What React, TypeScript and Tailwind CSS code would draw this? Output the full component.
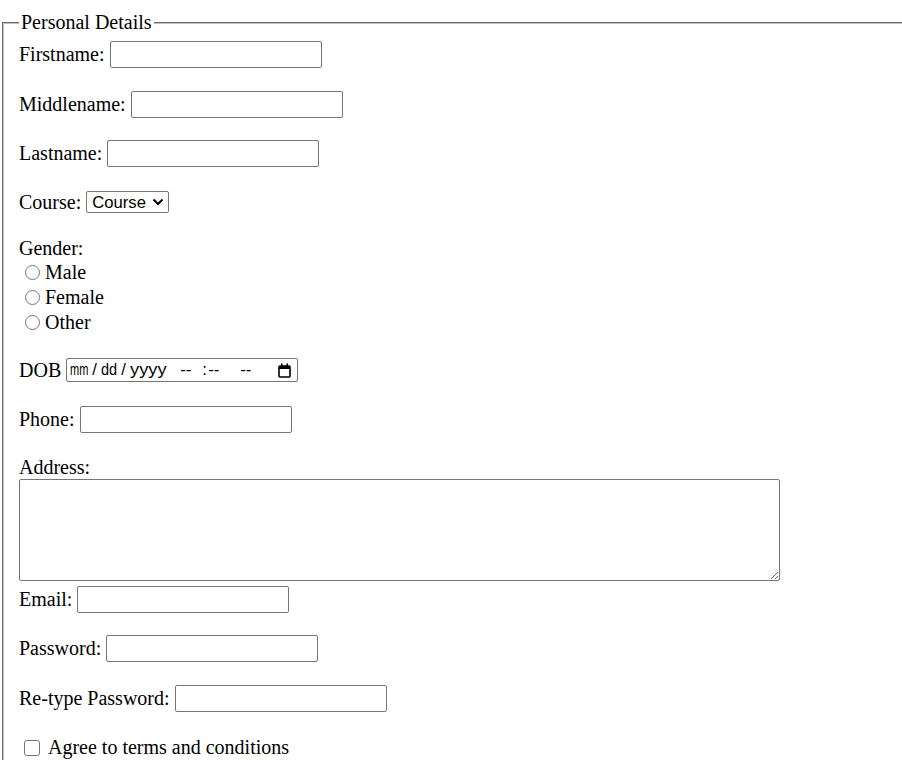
import React from "react";

const inputCls =
  "w-[212px] h-[27px] border border-[#767676] rounded-[2px] px-[2px] bg-white font-['Liberation_Sans',Arial,sans-serif] text-[16.67px] outline-none";

function Row({ label, mt, type = "text" }: { label: string; mt: string; type?: string }) {
  return (
    <div className={`flex items-center ${mt}`}>
      <span className="leading-[23px]">{label}</span>
      <input type={type} className={`ml-[5px] ${inputCls}`} />
    </div>
  );
}

function Radio({ label }: { label: string }) {
  return (
    <label className="flex items-center h-[25px]">
      <input
        type="radio"
        name="gender"
        className="appearance-none ml-[6px] w-[15px] h-[15px] rounded-full border border-[#767676] bg-white"
      />
      <span className="ml-[5px] leading-[23px]">{label}</span>
    </label>
  );
}

function CalendarIcon() {
  return (
    <svg width="13" height="15" viewBox="0 0 13 15" fill="none">
      <rect x="1" y="3" width="11" height="11" rx="1" stroke="#000" strokeWidth="1.6" />
      <rect x="1" y="3" width="11" height="3" fill="#000" />
      <rect x="3" y="0.5" width="1.6" height="3" fill="#000" />
      <rect x="8.4" y="0.5" width="1.6" height="3" fill="#000" />
    </svg>
  );
}

export default function App() {
  return (
    <div className="w-[902px] h-[760px] overflow-hidden bg-white text-black font-['Liberation_Serif','Times_New_Roman',serif] text-[20px]">
      <form>
        <fieldset className="mt-[11px] ml-[2px] w-[1000px] border-2 [border-style:groove] border-[#c0c0c0] px-[15px] pb-[12px]">
          <legend className="px-[2px] leading-[23px]">Personal Details</legend>

          <Row label="Firstname:" mt="mt-[7px]" />
          <Row label="Middlename:" mt="mt-[23px]" />
          <Row label="Lastname:" mt="mt-[22px]" />

          <div className="flex items-center mt-[24px] h-[22px]">
            <span className="leading-[23px]">Course:</span>
            <div className="relative ml-[5px]">
              <select className="appearance-none block w-[83px] h-[22px] border border-[#767676] rounded-[2px] pl-[5px] bg-white font-['Liberation_Sans',Arial,sans-serif] text-[16.67px] leading-[21px] outline-none">
                <option>Course</option>
              </select>
              <svg
                className="absolute left-[66px] top-[7px] pointer-events-none"
                width="12"
                height="8"
                viewBox="0 0 12 8"
                fill="none"
              >
                <path d="M1.5 1.5 L6 6 L10.5 1.5" stroke="#000" strokeWidth="2" />
              </svg>
            </div>
          </div>

          <div className="mt-[24px] h-[23px] leading-[23px]">Gender:</div>
          <Radio label="Male" />
          <Radio label="Female" />
          <Radio label="Other" />

          <div className="flex items-center mt-[23px] h-[24px]">
            <span className="leading-[23px]">DOB</span>
            <div className="ml-[5px] w-[232px] h-[24px] border border-[#767676] rounded-[2px] bg-white flex items-center font-['Liberation_Sans',Arial,sans-serif] text-[16.67px] leading-[20px] text-black whitespace-nowrap">
              <span className="ml-[3px] inline-block w-[18px]">
                <span className="inline-block origin-left scale-x-[0.66]">mm</span>
              </span>
              <span className="ml-[4px] inline-block w-[5px]">/</span>
              <span className="ml-[4px] inline-block w-[16px]">
                <span className="inline-block origin-left scale-x-[0.87]">dd</span>
              </span>
              <span className="ml-[4px] inline-block w-[5px]">/</span>
              <span className="ml-[4px] inline-block w-[37px]">
                <span className="inline-block origin-left scale-x-[1.1]">yyyy</span>
              </span>
              <span className="ml-[13px] inline-block w-[12px]">--</span>
              <span className="ml-[10px] inline-block w-[3px]">:</span>
              <span className="ml-[3px] inline-block w-[14px]">--</span>
              <span className="ml-[18px] inline-block w-[15px]">--</span>
              <span className="ml-auto mr-[6px] flex">
                <CalendarIcon />
              </span>
            </div>
          </div>

          <Row label="Phone:" mt="mt-[24px]" type="tel" />

          <div className="mt-[23px] h-[23px] leading-[23px]">Address:</div>
          <textarea className="block w-[761px] h-[102px] border border-[#767676] rounded-[2px] bg-white outline-none resize" />

          <Row label="Email:" mt="mt-[5px]" type="email" />
          <Row label="Password:" mt="mt-[22px]" type="password" />
          <Row label="Re-type Password:" mt="mt-[23px]" type="password" />

          <label className="flex items-center mt-[23px] h-[25px]">
            <input
              type="checkbox"
              className="appearance-none ml-[5px] w-[16px] h-[16px] rounded-[3px] border border-[#767676] bg-white"
            />
            <span className="ml-[8px] leading-[23px]">Agree to terms and conditions</span>
          </label>
        </fieldset>
      </form>
    </div>
  );
}
